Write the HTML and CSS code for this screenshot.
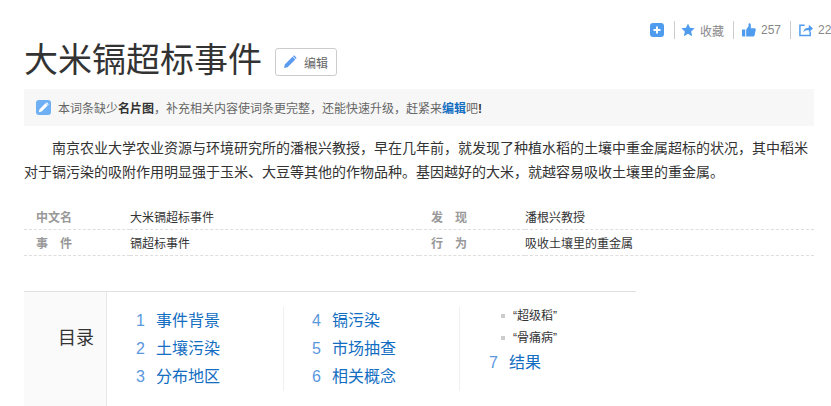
FILE: index.html
```html
<!DOCTYPE html>
<html lang="zh">
<head>
<meta charset="utf-8">
<title>大米镉超标事件</title>
<link rel="stylesheet" href="styles.css">
</head>
<body>
<div class="page">
  <div class="tools">
    <svg class="ic ic-plus" width="14" height="14" viewBox="0 0 14 14"><rect width="14" height="14" rx="3" fill="#4f9cee"/><path d="M3.500 7h7M7 3.500v7" stroke="#fff" stroke-width="2"/></svg>
    <span class="sep sep-first"></span>
    <svg class="ic" width="14" height="14" viewBox="0 0 15 15"><path d="M7.500 0.500l2.100 4.600 5 .6-3.700 3.400 1 5-4.400-2.500-4.400 2.500 1-5L.4 5.700l5-.6z" fill="#4f9cee"/></svg>
    <span class="tool-text">收藏</span>
    <span class="sep"></span>
    <svg class="ic" width="14" height="14" viewBox="0 0 15 15"><path d="M0 7h3.500v7.500H1a1 1 0 0 1-1-1zM4.500 7l2.500-3.500V1c0-1 2.500-1 2.500 1.500V5.500H13.500c1 0 1.500 1 1.200 2l-1.200 5.500c-.2 1-1 1.500-2 1.500H4.500z" fill="#4f9cee"/></svg>
    <span class="tool-text">257</span>
    <span class="sep"></span>
    <svg class="ic" width="14" height="14" viewBox="0 0 15 15"><path d="M6 2.500H1v11h11V9" fill="none" stroke="#4f9cee" stroke-width="1.600"/><path d="M4.500 10c.5-3.500 3-5 6-5V2l4.500 4-4.500 4V7.500c-2.500 0-4.500 .8-6 2.500z" fill="#4f9cee"/></svg>
    <span class="tool-text">22</span>
  </div>

  <div class="title-row">
    <h1 class="title">大米镉超标事件</h1>
    <a class="edit-btn">
      <svg width="14" height="14" viewBox="0 0 14 14"><path d="M1 13l.8-3.600L9.500 1.700l2.800 2.800-7.700 7.700zM10.300 .9c.5-.5 1-.5 1.500 0l1.300 1.300c.5.5.5 1 0 1.500l-.3.300-2.800-2.800z" fill="#5b9bf0"/></svg>
      编辑
    </a>
  </div>

  <div class="notice">
    <span class="notice-icon"><svg width="11" height="11" viewBox="0 0 14 14"><path d="M1 13l.8-3.600L9.500 1.700l2.800 2.800-7.700 7.700zM10.300 .9c.5-.5 1-.5 1.500 0l1.300 1.300c.5.5.5 1 0 1.500l-.3.300-2.800-2.800z" fill="#fff"/></svg></span>
    <span>本词条缺少<b class="strong">名片图</b>，补充相关内容使词条更完整，还能快速升级，赶紧来<b class="link-b">编辑</b>吧<b class="strong">!</b></span>
  </div>

  <p class="para">南京农业大学农业资源与环境研究所的潘根兴教授，早在几年前，就发现了种植水稻的土壤中重金属超标的状况，其中稻米对于镉污染的吸附作用明显强于玉米、大豆等其他的作物品种。基因越好的大米，就越容易吸收土壤里的重金属。</p>

  <dl class="info">
    <dt>中文名</dt><dd>大米镉超标事件</dd>
    <dt class="sp">发 现</dt><dd>潘根兴教授</dd>
    <dt class="sp">事 件</dt><dd>镉超标事件</dd>
    <dt class="sp">行 为</dt><dd>吸收土壤里的重金属</dd>
  </dl>

  <div class="toc">
    <div class="toc-title">目录</div>
    <div class="toc-body">
      <ol class="toc-col">
        <li><span class="n">1</span>事件背景</li>
        <li><span class="n">2</span>土壤污染</li>
        <li><span class="n">3</span>分布地区</li>
      </ol>
      <ol class="toc-col">
        <li><span class="n">4</span>镉污染</li>
        <li><span class="n">5</span>市场抽查</li>
        <li><span class="n">6</span>相关概念</li>
      </ol>
      <div class="toc-col last">
        <ul class="subs">
          <li>“超级稻”</li>
          <li>“骨痛病”</li>
        </ul>
        <div class="toc-item"><span class="n">7</span>结果</div>
      </div>
    </div>
  </div>
</div>
</body>
</html>
```

FILE: styles.css
```css
* { box-sizing: border-box; }
html, body { margin: 0; height: 100%; overflow: hidden; background: #fff; }
body {
  font-family: "Liberation Sans", "Noto Sans CJK SC", sans-serif;
  font-size: 12px;
  color: #333;
}
.page { width: 790px; margin-left: 24px; }
.tools {
  display: flex;
  align-items: center;
  height: 20px;
  margin-top: 20px;
  margin-left: 626px;
  width: 240px;
  white-space: nowrap;
  color: #888;
  font-size: 12px;
}
.ic { flex: none; margin-right: 5px; }
.ic-plus { margin-right: 1px; }
.sep { width: 1px; height: 18px; background: #ccc; margin: 0 8px 0 9px; }
.sep-first { margin-right: 6px; }
.title-row { display: flex; align-items: flex-end; height: 40px; }
.title { margin: 0; font-size: 34px; font-weight: 400; line-height: 40px; color: #333; }
.edit-btn {
  display: flex;
  align-items: center;
  gap: 7px;
  width: 62px;
  height: 28px;
  margin: 0 0 4px 13px;
  padding-left: 7px;
  border: 1px solid #ccc;
  border-radius: 3px;
  font-size: 12px;
  color: #666;
}
.notice {
  display: flex;
  align-items: center;
  height: 37px;
  margin-top: 9px;
  padding-left: 12px;
  background: #f7f7f7;
  color: #666;
}
.notice-icon {
  display: flex;
  align-items: center;
  justify-content: center;
  width: 15px;
  height: 15px;
  margin-right: 7px;
  border-radius: 3px;
  background: #6fb0f5;
}
.strong { color: #333; }
.link-b { color: #136ec2; }
.para {
  margin: 10px 0 0;
  font-size: 14px;
  line-height: 24px;
  text-indent: 28px;
  color: #333;
}
.info {
  display: grid;
  grid-template-columns: 106px 289px 106px 289px;
  margin: 20px 0 0;
}
.info dt, .info dd {
  height: 26px;
  margin: 0;
  padding-top: 1px;
  line-height: 26px;
  font-size: 12px;
  border-bottom: 1px dashed #dedede;
}
.info dt { padding-left: 12px; font-weight: 700; color: #999; }
.info dt.sp { word-spacing: 8.67px; }
.toc {
  display: flex;
  width: 612px;
  height: 120px;
  margin-top: 35px;
  border-top: 1px solid #e0e0e0;
}
.toc-title {
  width: 83px;
  padding: 33px 0 0 34px;
  background: #fafafa;
  border-right: 1px solid #e8e8e8;
  font-size: 18px;
  line-height: 26px;
  color: #333;
}
.toc-body { display: flex; padding-top: 15px; }
.toc-col {
  width: 176px;
  height: 84px;
  margin: 0;
  padding: 0 0 0 28px;
  list-style: none;
  border-right: 1px solid #f0f0f0;
  font-size: 16px;
  line-height: 28px;
  color: #136ec2;
}
.toc-col:first-child { width: 177px; padding-left: 29px; }
.toc-col.last { border-right: 0; padding-left: 29px; }
.toc-col li, .toc-item { height: 28px; white-space: nowrap; }
.n { display: inline-block; width: 20px; color: #5a98de; }
.subs {
  margin: -2px 0 0;
  padding: 0 0 0 24px;
  list-style: none;
  font-size: 12px;
  line-height: 22px;
  color: #333;
}
.subs li { height: 22px; position: relative; }
.subs li::before {
  content: "";
  position: absolute;
  left: -12px;
  top: 9px;
  width: 4px;
  height: 4px;
  background: #ccc;
}
```
